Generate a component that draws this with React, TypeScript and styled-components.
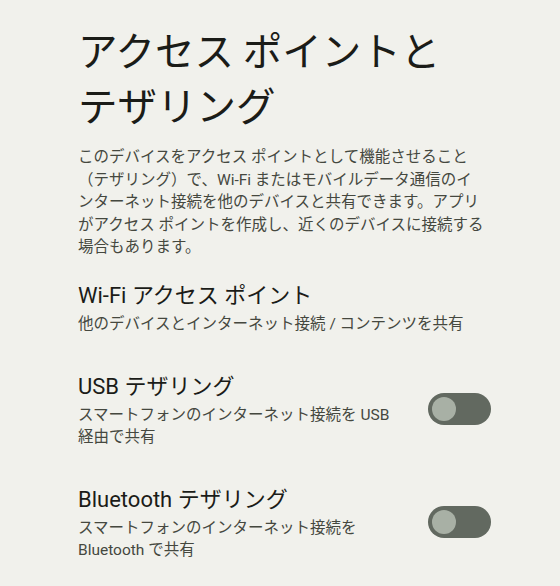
import React from "react";
import styled, { createGlobalStyle } from "styled-components";

const GlobalStyle = createGlobalStyle`
  html, body {
    margin: 0;
    padding: 0;
    background: #f1f1ec;
  }
  body {
    font-family: Roboto, "Noto Sans CJK JP", sans-serif;
  }
`;

const Page = styled.div`
  width: 560px;
  height: 586px;
  box-sizing: border-box;
  padding: 21px 69px 0 78px;
  background: #f1f1ec;
  overflow: hidden;
  display: flex;
  flex-direction: column;
`;

const Title = styled.h1`
  margin: 0;
  font-family: "Noto Sans CJK JP", sans-serif;
  font-weight: 400;
  font-size: 39.5px;
  line-height: 55px;
  color: #1b1c18;
  white-space: nowrap;
`;

const Intro = styled.p`
  margin: 15px 0 0;
  font-family: Roboto, "Noto Sans CJK JP", sans-serif;
  font-size: 15.5px;
  line-height: 22.5px;
  color: #45483f;
  white-space: nowrap;
`;

const List = styled.div`
  display: flex;
  flex-direction: column;
  margin-top: 3px;
`;

const Item = styled.div`
  display: flex;
  align-items: center;
  justify-content: space-between;
  padding: 18px 0;
`;

const TextCol = styled.div`
  display: flex;
  flex-direction: column;
`;

const ItemTitle = styled.div`
  font-family: Roboto, "Noto Sans CJK JP", sans-serif;
  font-size: 22px;
  line-height: 32px;
  color: #1b1c18;
  white-space: nowrap;
`;

const ItemSummary = styled.div`
  margin-top: 1px;
  font-family: Roboto, "Noto Sans CJK JP", sans-serif;
  font-size: 15.5px;
  line-height: 22px;
  color: #45483f;
  white-space: nowrap;
`;

const Track = styled.div<{ $on?: boolean }>`
  flex: none;
  width: 63px;
  height: 32px;
  border-radius: 16px;
  background: ${(p) => (p.$on ? "#4a6a3f" : "#626960")};
  display: flex;
  align-items: center;
  justify-content: ${(p) => (p.$on ? "flex-end" : "flex-start")};
  padding: 0 4px;
  box-sizing: border-box;
`;

const Thumb = styled.div`
  width: 24px;
  height: 24px;
  border-radius: 50%;
  background: #a8b0a5;
`;

const Switch = ({ on }: { on?: boolean }) => (
  <Track $on={on} role="switch" aria-checked={!!on}>
    <Thumb />
  </Track>
);

export default function App() {
  return (
    <>
      <GlobalStyle />
      <Page>
        <Title>
          アクセス ポイントと
          <br />
          テザリング
        </Title>
        <Intro>
          このデバイスをアクセス ポイントとして機能させること
          <br />
          （テザリング）で、Wi-Fi またはモバイルデータ通信のイ
          <br />
          ンターネット接続を他のデバイスと共有できます。アプリ
          <br />
          がアクセス ポイントを作成し、近くのデバイスに接続する
          <br />
          場合もあります。
        </Intro>
        <List>
          <Item>
            <TextCol>
              <ItemTitle>Wi-Fi アクセス ポイント</ItemTitle>
              <ItemSummary>他のデバイスとインターネット接続 / コンテンツを共有</ItemSummary>
            </TextCol>
          </Item>
          <Item>
            <TextCol>
              <ItemTitle>USB テザリング</ItemTitle>
              <ItemSummary>
                スマートフォンのインターネット接続を USB
                <br />
                経由で共有
              </ItemSummary>
            </TextCol>
            <Switch />
          </Item>
          <Item>
            <TextCol>
              <ItemTitle>Bluetooth テザリング</ItemTitle>
              <ItemSummary>
                スマートフォンのインターネット接続を
                <br />
                Bluetooth で共有
              </ItemSummary>
            </TextCol>
            <Switch />
          </Item>
        </List>
      </Page>
    </>
  );
}
